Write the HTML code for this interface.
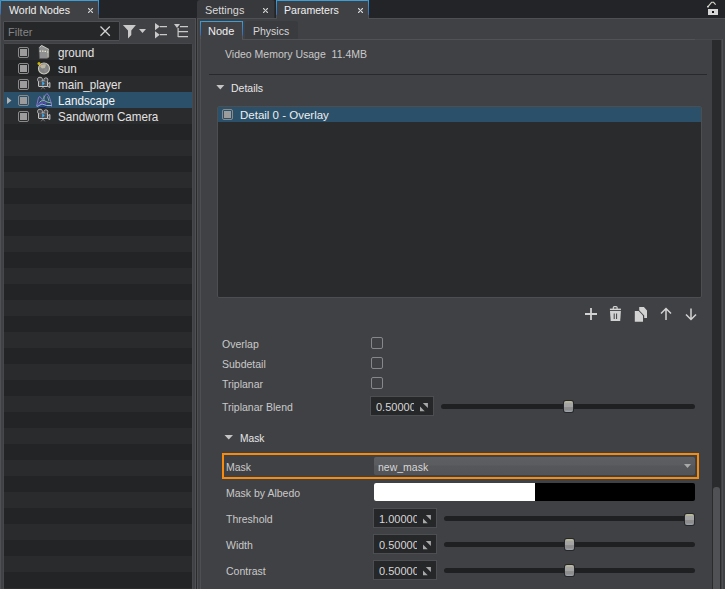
<!DOCTYPE html>
<html><head><meta charset="utf-8">
<style>
*{margin:0;padding:0;box-sizing:border-box;}
html,body{width:725px;height:589px;overflow:hidden;background:#232427;font-family:"Liberation Sans",sans-serif;font-size:11px;color:#dcdcdc;}
.a{position:absolute;}
.t{position:absolute;white-space:pre;line-height:12px;}
.row{position:absolute;left:0;width:186px;height:16px;}
.cb{position:absolute;width:11px;height:11px;border:1px solid #8a8a8a;border-radius:2px;}
.cb::after{content:"";position:absolute;left:1px;top:1px;width:7px;height:7px;background:#9c9c9c;}
.lbl{position:absolute;white-space:pre;line-height:12px;font-size:10.5px;color:#c9c9c9;}
.chk{position:absolute;width:12px;height:12px;border:1px solid #85878a;border-radius:2px;}
.spin{position:absolute;width:64px;height:20px;background:#262729;border:1px solid #4d4e51;overflow:hidden;}
.spin span{position:absolute;left:5px;top:4px;font-size:11px;line-height:12px;color:#d6d6d6;width:38px;overflow:hidden;white-space:pre;}
.track{position:absolute;height:5px;background:#1f2022;border-radius:3px;}
.handle{position:absolute;width:9px;height:11px;border-radius:2px;background:linear-gradient(#bebc9a 0,#b4b39c 1.5px,#a6a6a6 2px,#a3a3a3 6px,#8f8f8f 6.5px,#8c8c8c 9px,#9ba1a7 10px);box-shadow:0 0 0 1px #26272a;}
</style></head><body>

<!-- LEFT PANEL -->
<div class="a" style="left:0;top:18px;width:197px;height:571px;background:#404145;"></div>
<div class="a" style="left:98px;top:18px;width:98px;height:1px;background:#4e4f53;"></div>
<div class="a" style="left:195px;top:18px;width:1px;height:571px;background:#4f5054;"></div>
<div class="a" style="left:0;top:15px;width:1px;height:574px;background:#4f5054;"></div>
<div class="a" style="left:98px;top:15px;width:1px;height:4px;background:#4f5054;"></div>
<div class="a" style="left:196px;top:17px;width:1px;height:572px;background:#2a2b2d;"></div>
<!-- tab World Nodes -->
<div class="a" style="left:0;top:0;width:99px;height:18px;background:#404145;border-top:1px solid #3aa0da;border-radius:2px 2px 0 0;"></div>
<div class="a" style="left:0;top:0;width:1px;height:18px;background:linear-gradient(#3aa0da 0,#3a6ab0 14px,#4f5054 15px);border-radius:1px 0 0 0;"></div>
<div class="a" style="left:98px;top:0;width:1px;height:19px;background:linear-gradient(#3aa0da 0,#3a6ab0 14px,#4f5054 15px);"></div>
<div class="t" style="left:9px;top:4px;color:#f0f0f0;font-size:10.6px;">World Nodes</div>
<svg class="a" style="left:88px;top:8px" width="6" height="6" shape-rendering="crispEdges"><path d="M1 0h1v1h-1z M0 1h1v1h-1z M3 0h1v1h-1z M4 1h1v1h-1z M2 1h1v1h-1z M1 2h1v1h-1z M2 1h1v1h-1z M3 2h1v1h-1z M3 2h1v1h-1z M2 3h1v1h-1z M1 2h1v1h-1z M2 3h1v1h-1z M4 3h1v1h-1z M3 4h1v1h-1z M0 3h1v1h-1z M1 4h1v1h-1z " fill="#d0d0d0" opacity="0.35"/><path d="M0 0h1v1h-1z M4 0h1v1h-1z M1 1h1v1h-1z M3 1h1v1h-1z M2 2h1v1h-1z M2 2h1v1h-1z M3 3h1v1h-1z M1 3h1v1h-1z M4 4h1v1h-1z M0 4h1v1h-1z " fill="#d0d0d0"/></svg>

<!-- filter box -->
<div class="a" style="left:3px;top:21px;width:117px;height:20px;background:#262729;border:1px solid #4f5054;border-radius:1px;"></div>
<div class="t" style="left:8px;top:26px;color:#858585;font-size:11px;">Filter</div>
<svg class="a" style="left:99px;top:25px" width="13" height="13"><path d="M1.5 1.5L10.8 10.8M10.8 1.5L1.5 10.8" stroke="#d2d2d2" stroke-width="1.3"/></svg>
<!-- funnel -->
<svg class="a" style="left:118px;top:18px" width="80" height="26">
 <path d="M4.9 7H17.9L13.3 12.5V17L10 20.5V12.5Z" fill="#c9c9c9"/>
 <path d="M21 11H28L24.5 15Z" fill="#c9c9c9"/>
 <path d="M37 5V12.2L41.8 8.6Z M37 13.2V20.4L41.8 16.8Z" fill="#c9c9c9"/>
 <path d="M42 8h7v1.2h-7z M42 16h7v1.2h-7z" fill="#c9c9c9"/>
 <path d="M56 6H62L59 10Z" fill="#c9c9c9"/>
 <path d="M62 8h8v1.2h-8z M59.5 10h1.2v9h-1.2z M60 13h10v1.2h-10z M60 18h10v1.2h-10z" fill="#c9c9c9"/>
</svg>

<!-- list -->
<div class="a" style="left:3px;top:43px;width:190px;height:546px;border:1px solid #47484b;border-bottom:none;border-radius:3px 3px 0 0;"></div>
<div class="a" id="list" style="left:4px;top:44px;width:188px;height:545px;background:#232426;overflow:hidden;">
  <div class="row" style="top:0;width:188px;background:#2a2b2d"></div>
  <div class="row" style="top:32px;width:188px;background:#2a2b2d"></div>
  <div class="row" style="top:48px;width:188px;background:#2b5069"></div>
  <div class="row" style="top:64px;width:188px;background:#2a2b2d"></div>
  <div class="row" style="top:96px;width:188px;background:#2a2b2d"></div>
  <div class="row" style="top:128px;width:188px;background:#2a2b2d"></div>
  <div class="row" style="top:160px;width:188px;background:#2a2b2d"></div>
  <div class="row" style="top:192px;width:188px;background:#2a2b2d"></div>
  <div class="row" style="top:224px;width:188px;background:#2a2b2d"></div>
  <div class="row" style="top:256px;width:188px;background:#2a2b2d"></div>
  <div class="row" style="top:288px;width:188px;background:#2a2b2d"></div>
  <div class="row" style="top:320px;width:188px;background:#2a2b2d"></div>
  <div class="row" style="top:352px;width:188px;background:#2a2b2d"></div>
  <div class="row" style="top:384px;width:188px;background:#2a2b2d"></div>
  <div class="row" style="top:416px;width:188px;background:#2a2b2d"></div>
  <div class="row" style="top:448px;width:188px;background:#2a2b2d"></div>
  <div class="row" style="top:480px;width:188px;background:#2a2b2d"></div>
  <div class="row" style="top:512px;width:188px;background:#2a2b2d"></div>
  <div class="row" style="top:544px;width:188px;background:#2a2b2d"></div>
</div>
<!-- list items -->
<div class="cb" style="left:18px;top:47px"></div>
<div class="cb" style="left:18px;top:63px"></div>
<div class="cb" style="left:18px;top:79px"></div>
<div class="cb" style="left:18px;top:95px"></div>
<div class="cb" style="left:18px;top:111px"></div>
<svg class="a" style="left:7px;top:97px" width="5" height="8"><path d="M0 0L4.5 3.5L0 7Z" fill="#b3b3b3"/></svg>
<div class="t" style="left:58px;top:47px;font-size:12.4px;color:#e2e2e2;transform:scaleX(0.94);transform-origin:0 0;">ground</div>
<div class="t" style="left:58px;top:63px;font-size:12.4px;color:#e2e2e2;transform:scaleX(0.94);transform-origin:0 0;">sun</div>
<div class="t" style="left:58px;top:79px;font-size:12.4px;color:#e2e2e2;transform:scaleX(0.94);transform-origin:0 0;">main_player</div>
<div class="t" style="left:58px;top:95px;font-size:12.4px;color:#f2f2f2;transform:scaleX(0.94);transform-origin:0 0;">Landscape</div>
<div class="t" style="left:58px;top:111px;font-size:12.4px;color:#e2e2e2;transform:scaleX(0.94);transform-origin:0 0;">Sandworm Camera</div>

<!-- node icons -->
<svg class="a" style="left:36px;top:44px" width="16" height="16">
 <path d="M3 3.5L5.5 1L13 5.5V13L11 14.5H3.5Z" fill="#8f9092" stroke="#5c5d60" stroke-width="0.6"/>
 <path d="M3.5 3.5L5.5 1.5L13 5.5" stroke="#c8c8c0" stroke-width="1" fill="none"/>
 <path d="M3.5 6.5h1.5v1.3h-1.5z M6 6.5h1.5v1.3h-1.5z M8.5 6.8h1.5v1.3h-1.5z M11 7.3h1.3v1.5h-1.3z" fill="#e6e6d0"/>
 <path d="M12 6v7.5" stroke="#b8b8a0" stroke-width="1"/>
</svg>
<svg class="a" style="left:36px;top:60px" width="16" height="16">
 <circle cx="8" cy="8.5" r="5.5" fill="#818284" stroke="#cacaba" stroke-width="1.1"/>
 <path d="M4 6.5Q6 3.5 10 4.5L9 8L6 8.5Z" fill="#b8b8a0"/>
 <path d="M9 8L11.5 9L9.5 13L8 11Z" fill="#8a8a8a"/>
 <circle cx="3" cy="3.5" r="1.5" fill="#c9b800"/>
 <circle cx="5.5" cy="5.5" r="0.8" fill="#f0a080"/>
</svg>
<svg class="a" style="left:36px;top:76px" width="16" height="16">
 <g stroke="#c4c4c4" stroke-width="1" fill="#4e4f52">
  <circle cx="4" cy="3.6" r="2.4"/>
  <circle cx="9.9" cy="3.9" r="2"/>
  <rect x="2.5" y="5" width="9" height="5.5" rx="0.5"/>
  <path d="M11.5 7.6L13.9 6.6V11.4L11.5 10.4Z"/>
 </g>
 <g fill="#4e4f52"><circle cx="4" cy="3.6" r="1.9"/><circle cx="9.9" cy="3.9" r="1.5"/><rect x="3" y="5.5" width="8" height="4.5"/></g>
 <path d="M6.2 5.3L8.7 7.5L6.2 9.7Z" fill="#3ab0f4"/>
 <path d="M7 11L5.2 13.3M7 11L8.8 13.3" stroke="#8a8a8a" stroke-width="0.8"/>
</svg>
<svg class="a" style="left:36px;top:92px" width="16" height="16">
 <path d="M0.5 14.5L2.5 5.5L4 4.5L6 7.5L7 7L9.5 3L11 1.5L13 4L15.5 12L15.5 14.5Z" fill="#2f4a6e"/>
 <path d="M1 13.5L5 9L8 8.5L11 10L15.5 11" stroke="#8ed0a0" stroke-width="0.9" fill="none"/>
 <path d="M0.5 14.5L2.5 5.5L4 4.5L6 7.5L7 7L9.5 3L11 1.5L13 4L15.5 12V14.5" stroke="#8f7fd0" stroke-width="0.9" fill="none"/>
 <path d="M1.5 12.5L8 9.5L10 12" stroke="#5a4ab0" stroke-width="1.6" fill="none"/>
 <path d="M1 14.5L6 12L10.5 13.5L15.5 13.5" stroke="#9ec2ee" stroke-width="0.9" fill="none"/>
 <path d="M8 3.5V9M11.5 4.5L13 9" stroke="#7ec890" stroke-width="0.8" fill="none"/>
 <path d="M3 15.5H8.5L10.5 14.5" stroke="#102a7a" stroke-width="1.1" fill="none"/>
</svg>
<svg class="a" style="left:36px;top:108px" width="16" height="16">
 <g stroke="#c4c4c4" stroke-width="1" fill="#4e4f52">
  <circle cx="4" cy="3.6" r="2.4"/>
  <circle cx="9.9" cy="3.9" r="2"/>
  <rect x="2.5" y="5" width="9" height="5.5" rx="0.5"/>
  <path d="M11.5 7.6L13.9 6.6V11.4L11.5 10.4Z"/>
 </g>
 <g fill="#4e4f52"><circle cx="4" cy="3.6" r="1.9"/><circle cx="9.9" cy="3.9" r="1.5"/><rect x="3" y="5.5" width="8" height="4.5"/></g>
 <path d="M6.2 5.3L8.7 7.5L6.2 9.7Z" fill="#3ab0f4"/>
 <path d="M7 11L5.2 13.3M7 11L8.8 13.3" stroke="#8a8a8a" stroke-width="0.8"/>
</svg>

<!-- RIGHT PANEL -->
<div class="a" style="left:197px;top:18px;width:528px;height:571px;background:#404145;border-left:1px solid #4e4f53;"></div>
<div class="a" style="left:197px;top:18px;width:80px;height:1px;background:#4f5054;"></div>
<div class="a" style="left:368px;top:18px;width:357px;height:1px;background:#4f5054;"></div>
<div class="a" style="left:197px;top:0;width:78px;height:18px;background:#38393c;border-radius:3px 3px 0 0;"></div>
<div class="a" style="left:274px;top:1px;width:1px;height:17px;background:#2b2c2f;"></div>
<div class="t" style="left:205px;top:4px;color:#d8d8d8;font-size:10.9px;">Settings</div>
<svg class="a" style="left:263px;top:8px" width="6" height="6" shape-rendering="crispEdges"><path d="M1 0h1v1h-1z M0 1h1v1h-1z M3 0h1v1h-1z M4 1h1v1h-1z M2 1h1v1h-1z M1 2h1v1h-1z M2 1h1v1h-1z M3 2h1v1h-1z M3 2h1v1h-1z M2 3h1v1h-1z M1 2h1v1h-1z M2 3h1v1h-1z M4 3h1v1h-1z M3 4h1v1h-1z M0 3h1v1h-1z M1 4h1v1h-1z " fill="#cfcfcf" opacity="0.35"/><path d="M0 0h1v1h-1z M4 0h1v1h-1z M1 1h1v1h-1z M3 1h1v1h-1z M2 2h1v1h-1z M2 2h1v1h-1z M3 3h1v1h-1z M1 3h1v1h-1z M4 4h1v1h-1z M0 4h1v1h-1z " fill="#cfcfcf"/></svg>
<div class="a" style="left:276px;top:0;width:93px;height:19px;background:#404145;border-top:1px solid #3aa0da;border-radius:2px 2px 0 0;"></div>
<div class="a" style="left:276px;top:0;width:1px;height:15px;background:linear-gradient(#3aa0da,#3a6ab0);"></div>
<div class="a" style="left:276px;top:15px;width:1px;height:4px;background:#4f5054;"></div>
<div class="a" style="left:368px;top:0;width:1px;height:15px;background:linear-gradient(#3aa0da,#3a6ab0);"></div>
<div class="a" style="left:368px;top:15px;width:1px;height:4px;background:#4f5054;"></div>
<div class="t" style="left:284px;top:4px;color:#f0f0f0;font-size:10.6px;">Parameters</div>
<svg class="a" style="left:358px;top:8px" width="6" height="6" shape-rendering="crispEdges"><path d="M1 0h1v1h-1z M0 1h1v1h-1z M3 0h1v1h-1z M4 1h1v1h-1z M2 1h1v1h-1z M1 2h1v1h-1z M2 1h1v1h-1z M3 2h1v1h-1z M3 2h1v1h-1z M2 3h1v1h-1z M1 2h1v1h-1z M2 3h1v1h-1z M4 3h1v1h-1z M3 4h1v1h-1z M0 3h1v1h-1z M1 4h1v1h-1z " fill="#d8d8d8" opacity="0.35"/><path d="M0 0h1v1h-1z M4 0h1v1h-1z M1 1h1v1h-1z M3 1h1v1h-1z M2 2h1v1h-1z M2 2h1v1h-1z M3 3h1v1h-1z M1 3h1v1h-1z M4 4h1v1h-1z M0 4h1v1h-1z " fill="#d8d8d8"/></svg>
<!-- lock -->
<svg class="a" style="left:704px;top:0" width="20" height="17">
 <path d="M3.8 6.8L7.6 2.3H9.6L11.6 4.6" stroke="#d6d6cc" stroke-width="1.1" fill="none"/>
 <circle cx="3.9" cy="6.7" r="0.9" fill="#d8d8d8"/>
 <rect x="4" y="9" width="10" height="6" fill="#d6d6d6"/>
 <rect x="8" y="11" width="2" height="2" fill="#111"/>
</svg>

<!-- sub tabs -->
<div class="a" style="left:245px;top:21px;width:53px;height:18px;background:#3a3b3f;border-radius:2px 2px 0 0;"></div>
<div class="t" style="left:253px;top:25px;color:#d6d6d6;font-size:10.5px;">Physics</div>
<div class="a" style="left:200px;top:21px;width:43px;height:19px;background:#404145;border-top:1px solid #3aa0da;border-radius:2px 2px 0 0;"></div>
<div class="a" style="left:200px;top:21px;width:1px;height:19px;background:linear-gradient(#3aa0da 0,#3a6ab0 14px,#56575b 15px);"></div>
<div class="a" style="left:242px;top:21px;width:1px;height:18px;background:linear-gradient(#3aa0da 0,#3a6ab0 14px,#56575b 15px);"></div>
<div class="t" style="left:208px;top:25px;color:#f0f0f0;font-size:11px;">Node</div>

<!-- content frame -->
<div class="a" style="left:200px;top:39px;width:523px;height:550px;border-left:1px solid #4e4f53;border-right:1px solid #4e4f53;"></div>
<div class="a" style="left:242px;top:39px;width:453px;height:1px;background:#515256;"></div>
<div class="a" style="left:695px;top:39px;width:27px;height:1px;background:#48494d;"></div>

<div class="t" style="left:225px;top:48px;font-size:10.5px;color:#c9c9c9;">Video Memory Usage  11.4MB</div>
<div class="a" style="left:209px;top:74px;width:498px;height:1px;background:#28292b;"></div>

<!-- Details -->
<svg class="a" style="left:216px;top:85px" width="10" height="5"><path d="M0.3 0H8.3L4.3 4.5Z" fill="#c4c4c4"/></svg>
<div class="t" style="left:231px;top:82px;font-size:10.5px;color:#e6e6e6;">Details</div>

<div class="a" style="left:217px;top:106px;width:485px;height:192px;background:#2a2b2d;border:1px solid #4d4e51;border-radius:2px;"></div>
<div class="a" style="left:218px;top:107px;width:483px;height:15px;background:#2b5069;"></div>
<div class="cb" style="left:222px;top:109px"></div>
<div class="t" style="left:240px;top:109px;font-size:11.5px;color:#eeeeee;">Detail 0 - Overlay</div>

<!-- action icons -->
<svg class="a" style="left:580px;top:302px" width="122" height="24">
 <path d="M5 12H17M11 6V18" stroke="#d2d2d2" stroke-width="1.8"/>
 <path d="M33.3 7V5.6Q33.3 4.6 34.3 4.6H36.1Q37.1 4.6 37.1 5.6V7" stroke="#d2d2d2" stroke-width="1.2" fill="none"/>
 <path d="M29.9 6.6H40.9V8.1H29.9Z" fill="#d2d2d2"/>
 <path d="M30 9H40.9L40.2 19.1H30.7Z" fill="#d2d2d2"/>
 <path d="M34.2 11.5V17M36.6 11.5V17" stroke="#404145" stroke-width="1"/>
 <path d="M54.8 9.1H58.7L63 13.6V19.8H54.8Z" fill="#d2d2d2"/>
 <path d="M59.2 5.1H63.9L67 8.6V16H64.2V13.5L59.2 8.2Z" fill="#d2d2d2"/>
 <path d="M86 7V18M81 11.5L86 6.5L91 11.5" stroke="#d2d2d2" stroke-width="1.5" fill="none"/>
 <path d="M111 6.5V17.5M106 12.5L111 17.5L116 12.5" stroke="#d2d2d2" stroke-width="1.5" fill="none"/>
</svg>

<!-- properties -->
<div class="lbl" style="left:222px;top:338px;">Overlap</div>
<div class="chk" style="left:371px;top:337px"></div>
<div class="lbl" style="left:222px;top:358px;">Subdetail</div>
<div class="chk" style="left:371px;top:357px"></div>
<div class="lbl" style="left:222px;top:378px;">Triplanar</div>
<div class="chk" style="left:371px;top:377px"></div>
<div class="lbl" style="left:222px;top:401px;">Triplanar Blend</div>
<div class="spin" style="left:370px;top:396px"><span>0.50000</span></div>
<svg class="a" style="left:420px;top:403px" width="10" height="10"><path d="M2.6 -0.2H7.9V5.1Z M-0.6 3V8.3H4.7Z" fill="#a9a9a9"/></svg>
<div class="track" style="left:441px;top:404px;width:254px"></div>
<div class="handle" style="left:564px;top:401px"></div>

<!-- Mask -->
<svg class="a" style="left:224px;top:435px" width="10" height="5"><path d="M0.5 0H9L4.75 4.6Z" fill="#c4c4c4"/></svg>
<div class="t" style="left:240px;top:433px;font-size:10.2px;color:#e6e6e6;">Mask</div>

<div class="a" style="left:222px;top:453px;width:477px;height:26px;border:2px solid #f88a0c;"></div>
<div class="a" style="left:374px;top:457px;width:321px;height:18px;background:linear-gradient(#5e5f62 0,#5b5c5f 8px,#56575a 9px,#535457 18px);border-radius:2px;"></div>
<div class="lbl" style="left:226px;top:461px;">Mask</div>
<div class="t" style="left:378px;top:461px;font-size:10.5px;color:#d8d8d8;">new_mask</div>
<svg class="a" style="left:684px;top:464px" width="8" height="5"><path d="M0 0H7L3.5 4Z" fill="#a9a9a9"/></svg>

<div class="lbl" style="left:226px;top:487px;">Mask by Albedo</div>
<div class="a" style="left:374px;top:483px;width:321px;height:18px;background:#000;border-radius:2px;overflow:hidden;"><div style="width:161px;height:18px;background:#fff"></div></div>

<div class="lbl" style="left:226px;top:513px;">Threshold</div>
<div class="spin" style="left:373px;top:508px"><span>1.00000</span></div>
<svg class="a" style="left:423px;top:515px" width="10" height="10"><path d="M2.6 -0.2H7.9V5.1Z M-0.6 3V8.3H4.7Z" fill="#a9a9a9"/></svg>
<div class="track" style="left:444px;top:516px;width:251px"></div>
<div class="handle" style="left:685px;top:514px"></div>

<div class="lbl" style="left:226px;top:539px;">Width</div>
<div class="spin" style="left:373px;top:534px"><span>0.50000</span></div>
<svg class="a" style="left:423px;top:541px" width="10" height="10"><path d="M2.6 -0.2H7.9V5.1Z M-0.6 3V8.3H4.7Z" fill="#a9a9a9"/></svg>
<div class="track" style="left:444px;top:542px;width:251px"></div>
<div class="handle" style="left:565px;top:539px"></div>

<div class="lbl" style="left:226px;top:565px;">Contrast</div>
<div class="spin" style="left:373px;top:560px"><span>0.50000</span></div>
<svg class="a" style="left:423px;top:567px" width="10" height="10"><path d="M2.6 -0.2H7.9V5.1Z M-0.6 3V8.3H4.7Z" fill="#a9a9a9"/></svg>
<div class="track" style="left:444px;top:568px;width:251px"></div>
<div class="handle" style="left:565px;top:565px"></div>

<!-- scrollbar -->
<div class="a" style="left:712px;top:40px;width:9px;height:549px;background:#2a2b2d;"></div>
<div class="a" style="left:713px;top:487px;width:7px;height:102px;background:#505154;border-radius:3px 3px 0 0;"></div>

</body></html>
